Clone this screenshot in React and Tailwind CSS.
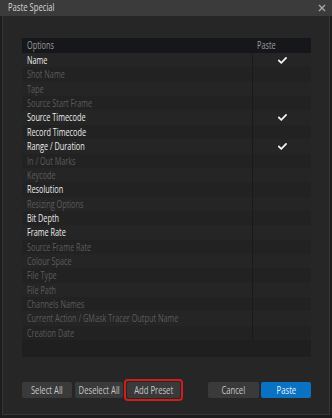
import React from 'react';

const rows = [
  { name: 'Name', on: true, check: true },
  { name: 'Shot Name' },
  { name: 'Tape' },
  { name: 'Source Start Frame' },
  { name: 'Source Timecode', on: true, check: true },
  { name: 'Record Timecode', on: true },
  { name: 'Range / Duration', on: true, check: true },
  { name: 'In / Out Marks' },
  { name: 'Keycode' },
  { name: 'Resolution', on: true },
  { name: 'Resizing Options' },
  { name: 'Bit Depth', on: true },
  { name: 'Frame Rate', on: true },
  { name: 'Source Frame Rate' },
  { name: 'Colour Space' },
  { name: 'File Type' },
  { name: 'File Path' },
  { name: 'Channels Names' },
  { name: 'Current Action / GMask Tracer Output Name' },
  { name: 'Creation Date' },
];

// the UI font is a narrow humanist face, so squeeze Open Sans horizontally
function Narrow({ children, center }) {
  return (
    <span className={`inline-block whitespace-nowrap scale-x-[0.73] ${center ? 'origin-center' : 'origin-left'}`}>
      {children}
    </span>
  );
}

function Check() {
  return (
    <svg width="9" height="7" viewBox="0 0 9 7" className="block">
      <path d="M1 3.6 L3.3 5.8 L8 1" fill="none" stroke="#f2f2f2" strokeWidth="1.8" strokeLinecap="square" />
    </svg>
  );
}

function Btn({ children, className = '' }) {
  return (
    <button className={`h-[16px] rounded-[2px] text-[10.5px] leading-none flex items-center justify-center ${className}`}>
      <Narrow center>{children}</Narrow>
    </button>
  );
}

export default function App() {
  return (
    <div
      className="w-[332px] h-[418px] bg-[#1c1c1c] flex flex-col select-none"
      style={{ fontFamily: '"Open Sans", "Noto Sans", sans-serif' }}
    >
      <div className="h-[16px] bg-[#3b3b3b] flex items-center justify-between pl-[8px] pr-[6px] shrink-0">
        <span className="text-[10.5px] text-[#d6d6d6]">
          <Narrow>Paste Special</Narrow>
        </span>
        <svg width="8" height="8" viewBox="0 0 8 8">
          <path d="M1 1 L7 7 M7 1 L1 7" stroke="#a8a8a8" strokeWidth="1.4" />
        </svg>
      </div>

      <div className="flex-1 mx-[2px] mb-[3px] border-x border-b border-[#363636] bg-[#262626] pl-[19px] pr-[17px] pt-[22px] flex flex-col">
        <div className="w-[289px]">
          <div className="h-[15px] bg-[#15171a] grid grid-cols-[230px_59px] items-center text-[10px] text-[#9c9c9c]">
            <div className="pl-[5px]"><Narrow>Options</Narrow></div>
            <div className="pl-[5px]"><Narrow>Paste</Narrow></div>
          </div>
          {rows.map((r, i) => (
            <div
              key={r.name}
              className={`h-[14.37px] grid grid-cols-[230px_59px] text-[10px] ${i % 2 === 0 ? 'bg-[#252525]' : 'bg-[#222222]'}`}
            >
              <div className={`pl-[5px] flex items-center ${r.on ? 'text-[#ececec]' : 'text-[#5c5c5c]'}`}>
                <Narrow>{r.name}</Narrow>
              </div>
              <div className="border-l border-[#1a1a1a] flex items-center justify-center">
                {r.check && <Check />}
              </div>
            </div>
          ))}
          <div className="h-[17px] bg-[#1f1f1f]" />
        </div>

        <div className="mt-[25px] flex items-center w-[289px]">
          <Btn className="w-[50px] bg-[#3a3a3a] text-[#c6c6c6]">Select All</Btn>
          <Btn className="w-[48px] ml-[3px] bg-[#3a3a3a] text-[#c6c6c6]">Deselect All</Btn>
          <div className="ml-[1px] p-[1px] border-2 border-[#d01c1c] rounded-[4px] -my-[3px]">
            <Btn className="w-[53px] bg-[#3a3a3a] text-[#c6c6c6]">Add Preset</Btn>
          </div>
          <Btn className="w-[51px] ml-auto bg-[#3a3a3a] text-[#c6c6c6]">Cancel</Btn>
          <Btn className="w-[50px] ml-[2px] bg-[#0a72c2] text-[#e8f1fa]">Paste</Btn>
        </div>
      </div>
    </div>
  );
}
